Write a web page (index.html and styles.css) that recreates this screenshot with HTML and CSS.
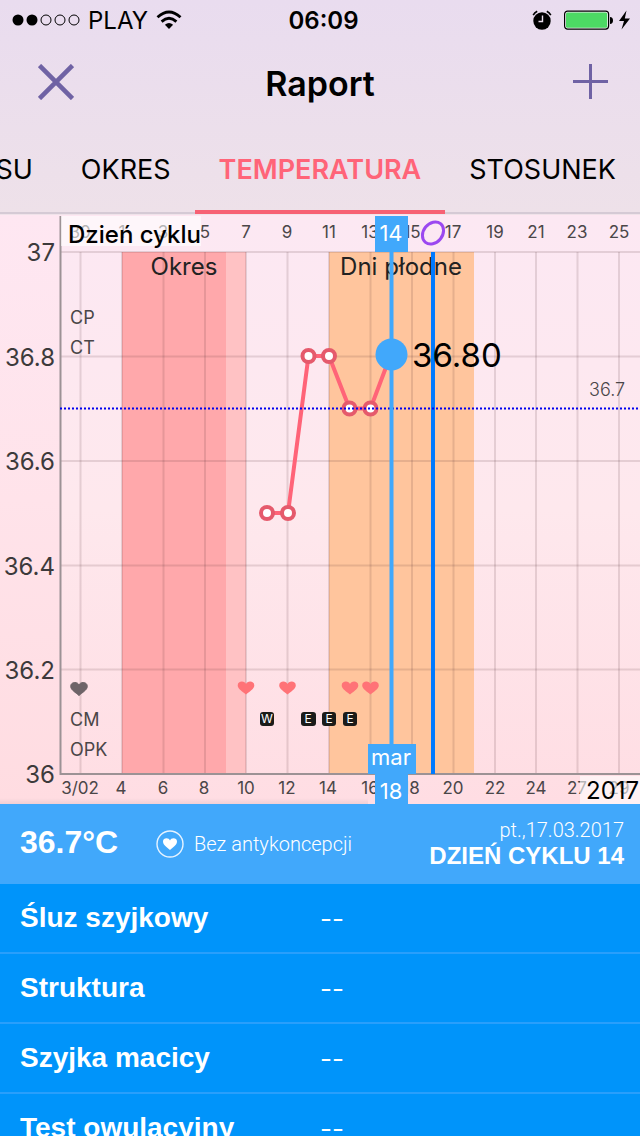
FILE: index.html
```html
<!DOCTYPE html>
<html lang="pl">
<head>
<meta charset="utf-8">
<meta name="viewport" content="width=device-width, initial-scale=1">
<title>Raport</title>
<link rel="stylesheet" href="styles.css">
</head>
<body>
<div class="screen">
  <div class="status">
    <div class="status-side">
      <svg width="68" height="12" viewBox="0 0 68 12" aria-hidden="true">
        <circle cx="6" cy="6" r="5.5"/><circle cx="20" cy="6" r="5.5"/>
        <g fill="none" stroke="#000"><circle cx="34" cy="6" r="5"/><circle cx="48" cy="6" r="5"/><circle cx="62" cy="6" r="5"/></g>
      </svg>
      <span class="carrier">PLAY</span>
      <svg width="26" height="20" viewBox="0 0 26 20" aria-hidden="true">
        <path d="M13 19 L8.9 14.8 Q13 11.2 17.1 14.8Z"/>
        <g fill="none" stroke="#000" stroke-width="2.8"><path d="M5.6 11.6 Q13 5 20.4 11.6"/><path d="M1.5 7.2 Q13 -3.2 24.5 7.2"/></g>
      </svg>
    </div>
    <span class="clock">06:09</span>
    <div class="status-side status-right">
      <svg width="20" height="20" viewBox="0 0 20 20" aria-hidden="true">
        <circle cx="10" cy="11" r="8.7"/><path d="M1.2 5.2A9 9 0 0 1 5.2 1.2M14.8 1.2A9 9 0 0 1 18.8 5.2" fill="none" stroke="#000" stroke-width="1.6"/>
        <path d="M10.5 5.5V11.5H6.5" fill="none" stroke="#ebdeee" stroke-width="1.4"/>
      </svg>
      <svg width="67" height="20" viewBox="0 0 67 20" aria-hidden="true">
        <rect x=".6" y="1.1" width="44" height="18" rx="3" fill="#f4eef5" stroke="#000" stroke-width="1.2"/>
        <rect x="2" y="2.5" width="41.2" height="15.2" rx="1.5" fill="#4cd964"/>
        <path d="M46 7Q49 7.4 49 10.5T46 14Z"/>
        <path d="M62.5 .5L55 11H60L57.5 19.5L66 8.5H60.8Z"/>
      </svg>
    </div>
  </div>

  <header class="bar">
    <button class="icon-button" type="button" aria-label="Zamknij">
      <svg width="36" height="36" viewBox="0 0 36 36"><path d="M1.500 1.500L34.500 34.500M34.500 1.500L1.500 34.500" stroke="#6f62a4" stroke-width="4.6"/></svg>
    </button>
    <h1 class="title">Raport</h1>
    <button class="icon-button icon-button-end" type="button" aria-label="Dodaj">
      <svg width="36" height="36" viewBox="0 0 36 36"><path d="M17.500 0V35M0 17.500H35" stroke="#6f62a4" stroke-width="3"/></svg>
    </button>
  </header>

  <nav class="tabs">
    <a class="tab" href="#su">SU</a>
    <a class="tab" href="#okres">OKRES</a>
    <a class="tab tab-active" href="#temperatura" aria-current="page">TEMPERATURA</a>
    <a class="tab" href="#stosunek">STOSUNEK</a>
  </nav>

  <svg class="chart" viewBox="0 215 640 589" role="img" aria-label="Wykres temperatury">
    <defs>
      <linearGradient id="plot" x1="0" y1="0" x2="0" y2="1"><stop offset="0" stop-color="#fce8f3"/><stop offset=".5" stop-color="#fee8ed"/><stop offset="1" stop-color="#ffdde3"/></linearGradient>
      <linearGradient id="fade" x1="0" y1="0" x2="0" y2="1"><stop offset="0" stop-color="#000" stop-opacity="0"/><stop offset="1" stop-color="#000" stop-opacity=".06"/></linearGradient>
      <path id="heart" d="M0 6.6C-3 3.600 -8.300 1 -8.300 -2.600C-8.300 -5.400 -6.200 -6.500 -4.200 -6.500C-2 -6.500 -.6 -5.500 0 -4C.6 -5.500 2 -6.500 4.200 -6.500C6.200 -6.500 8.300 -5.400 8.300 -2.600C8.300 1 3 3.600 0 6.600Z"/>
    </defs>
    <rect x="60" y="216" width="580" height="588" fill="url(#plot)"/>
    <rect x="122" y="252" width="104" height="522" fill="#ffa8ab"/>
    <rect x="226" y="252" width="20" height="522" fill="#ffc2c4"/>
    <rect x="329" y="252" width="145" height="522" fill="#ffc59d"/>

    <path class="grid" d="M80.500 252V774M122 252V774M163.500 252V774M205 252V774M246 252V774M287.500 252V774M329 252V774M370.500 252V774M412 252V774M453.500 252V774M495 252V774M536 252V774M577.500 252V774M619 252V774"/>
    <path class="grid" d="M60 252H640M60 356.500H640M60 461H640M60 565.500H640M60 669.500H640"/>
    <path class="axis" d="M60.500 216V774H640"/>

    <g class="y-label">
      <text x="55" y="261">37</text><text x="55" y="366">36.8</text><text x="55" y="470">36.6</text>
      <text x="55" y="575">36.4</text><text x="55" y="679">36.2</text><text x="55" y="783">36</text>
    </g>
    <g class="x-label">
      <text x="80" y="238">30</text><text x="122" y="238">1</text><text x="163" y="238">3</text><text x="205" y="238">5</text>
      <text x="246" y="238">7</text><text x="287" y="238">9</text><text x="329" y="238">11</text><text x="370" y="238">13</text>
      <text x="412" y="238">15</text><text x="453" y="238">17</text><text x="495" y="238">19</text><text x="536" y="238">21</text>
      <text x="577" y="238">23</text><text x="619" y="238">25</text>
      <text x="80" y="794">3/02</text><text x="121" y="794">4</text><text x="163" y="794">6</text><text x="204" y="794">8</text>
      <text x="246" y="794">10</text><text x="287" y="794">12</text><text x="328" y="794">14</text><text x="370" y="794">16</text>
      <text x="411" y="794">18</text><text x="453" y="794">20</text><text x="495" y="794">22</text><text x="536" y="794">24</text>
      <text x="577" y="794">27</text><text x="619" y="794">29</text>
    </g>

    <g fill="#fff" fill-opacity=".6"><rect x="61" y="216" width="140" height="30"/><rect x="580" y="776" width="60" height="28"/></g>
    <text class="caption" x="68" y="243">Dzień cyklu</text>
    <text class="year" x="586" y="799">2017</text>
    <g class="phase"><text x="184" y="275">Okres</text><text x="401" y="275">Dni płodne</text></g>
    <g class="marker">
      <text x="70" y="324">CP</text><text x="70" y="354">CT</text><text x="70" y="726">CM</text><text x="70" y="756">OPK</text>
      <text class="average" x="589" y="396">36.7</text>
    </g>

    <use href="#heart" x="79" y="689" fill="#6e6468" stroke="#6e6468"/>
    <g fill="#ff7377"><use href="#heart" x="246" y="688"/><use href="#heart" x="287.500" y="688"/><use href="#heart" x="350" y="688"/><use href="#heart" x="370.500" y="688"/></g>
    <g fill="#1b1b19"><rect x="260" y="712" width="14" height="14" rx="3"/><rect x="301" y="712" width="15" height="14" rx="3"/><rect x="322" y="712" width="14" height="14" rx="3"/><rect x="343" y="712" width="14" height="14" rx="3"/></g>
    <g class="flag"><text x="267" y="723">W</text><text x="308" y="723">E</text><text x="329" y="723">E</text><text x="350" y="723">E</text></g>

    <path d="M433 252V774" stroke="#007aff" stroke-width="4"/>
    <path d="M267 513H288L308.500 356H329L349.500 408.500H370.500L391 354" fill="none" stroke="#ff6478" stroke-width="4"/>
    <g fill="#fff" stroke="#e55a6c" stroke-width="4"><circle cx="267" cy="513" r="6"/><circle cx="288" cy="513" r="6"/><circle cx="308.500" cy="356" r="6"/><circle cx="329" cy="356" r="6"/><circle cx="349.500" cy="408.500" r="6"/><circle cx="370.500" cy="408.500" r="6"/></g>
    <path d="M60 408.500H640" stroke="#0000f0" stroke-width="2" stroke-dasharray="2 2"/>
    <path d="M391.500 250V746" stroke="#41a8fb" stroke-width="4"/>
    <circle cx="391.500" cy="354.500" r="16" fill="#41a8fb"/>
    <g fill="#41a8fb"><rect x="375" y="216" width="33" height="36"/><rect x="368" y="744" width="48" height="30"/><rect x="375" y="774" width="33" height="30"/></g>
    <g class="badge"><text x="391" y="241">14</text><text x="391" y="765">mar</text><text x="391" y="799">18</text></g>
    <ellipse cx="433" cy="233" rx="9.500" ry="12" transform="rotate(39 433 233)" fill="none" stroke="#9b48f0" stroke-width="3"/>
    <text class="reading" x="412" y="367">36.80</text>
    <rect x="0" y="798" width="368" height="6" fill="url(#fade)"/>
  </svg>

  <section class="summary">
    <strong class="temp">36.7°C</strong>
    <div class="method">
      <svg width="28" height="28" viewBox="0 0 28 28" aria-hidden="true"><circle cx="14" cy="14" r="13" fill="none" stroke="#e6f3ff" stroke-width="1.4"/><path d="M14 20C11 17 7 15 7 11.500C7 9.500 8.600 8.300 10.500 8.300C12.200 8.300 13.400 9.200 14 10.500C14.600 9.200 15.800 8.300 17.500 8.300C19.400 8.300 21 9.500 21 11.500C21 15 17 17 14 20Z" fill="#fff"/></svg>
      <span>Bez antykoncepcji</span>
    </div>
    <div class="day"><span class="date">pt.,17.03.2017</span><strong class="cycle-day">DZIEŃ CYKLU 14</strong></div>
  </section>

  <dl class="details">
    <div class="row"><dt>Śluz szyjkowy</dt><dd>--</dd></div>
    <div class="row"><dt>Struktura</dt><dd>--</dd></div>
    <div class="row"><dt>Szyjka macicy</dt><dd>--</dd></div>
    <div class="row"><dt>Test owulacyjny</dt><dd>--</dd></div>
  </dl>
</div>
</body>
</html>
```
FILE: styles.css
```css
* { box-sizing: border-box; }
body { margin: 0; font-family: Inter, "Liberation Sans", sans-serif; color: #000; }
.screen {
  display: flex;
  flex-direction: column;
  height: 100vh;
  overflow: hidden;
  background: linear-gradient(#e9dcef 0, #eee1e9 214px, #fee7f2 215px, #ffe3ea 500px, #ffdce1 804px);
}
.status, .bar, .tabs, .chart, .summary { flex: none; }
.status { display: flex; align-items: center; height: 40px; padding: 0 9px 0 12px; font-size: 24px; }
.status-side { display: flex; flex: 1; align-items: center; gap: 8px; }
.status-right { justify-content: flex-end; gap: 12px; }
.clock { padding-left: 4px; font-weight: 600; }

.bar { display: flex; align-items: center; justify-content: space-between; height: 84px; padding: 0 31px; }
.icon-button { width: 48px; height: 48px; padding: 0 5px 0 7px; border: 0; background: none; }
.icon-button-end { padding: 0 0 0 12px; }
.icon-button svg { display: block; }
.title { margin: 0; padding-top: 2px; font-size: 34px; font-weight: 600; }

.tabs { display: flex; justify-content: flex-end; height: 91px; overflow: hidden; border-bottom: 1px solid #f0e3ea; }
.tab {
  flex: none;
  height: 90px;
  padding: 0 24px;
  border-bottom: 2px solid #d5cad5;
  font-size: 27px;
  line-height: 92px;
  color: #000;
  text-decoration: none;
}
.tab-active { border-bottom: 4px solid #f76174; color: #ff6478; font-weight: 600; }

.chart { display: block; width: 100%; }
.grid { fill: none; stroke: #502832; stroke-opacity: .14; stroke-width: 2; }
.axis { fill: none; stroke: #9c9295; stroke-width: 2; }
.y-label { font-size: 24px; text-anchor: end; fill: #3c3a3b; }
.x-label { font-size: 17px; text-anchor: middle; fill: #4a4648; }
.caption { font-size: 24px; font-weight: 500; }
.year { font-size: 24px; }
.phase { font-size: 24px; text-anchor: middle; fill: #222; }
.marker { font-size: 18px; fill: #4a4648; }
.average { font-weight: 300; }
.flag { font-size: 12px; text-anchor: middle; fill: #fff; }
.badge { font-size: 22px; text-anchor: middle; fill: #fff; }
.reading { font-size: 33px; }

.summary {
  display: flex;
  align-items: center;
  height: 80px;
  padding: 0 16px 0 20px;
  background: #41a8fb;
  color: #fff;
  font-family: "Liberation Sans", sans-serif;
}
.temp { width: 136px; padding-bottom: 4px; font-size: 32px; }
.method { display: flex; align-items: center; gap: 10px; font-family: Roboto, sans-serif; font-size: 20px; font-weight: 300; }
.day { display: flex; flex: 1; flex-direction: column; text-align: right; }
.date { font-family: Roboto, sans-serif; font-size: 20px; font-weight: 300; line-height: 24px; }
.cycle-day { font-size: 24px; line-height: 28px; }

.details {
  flex: 1;
  min-height: 0;
  margin: 0;
  overflow: hidden;
  background: #0094fa;
  color: #fff;
  font-family: "Liberation Sans", sans-serif;
}
.row { display: grid; grid-template-columns: 1fr 1fr; align-items: center; height: 70px; padding: 0 20px; border-bottom: 2px solid #299ffb; }
.row dt { font-size: 28px; font-weight: 700; }
.row dd { margin: 0; font-family: Inter, sans-serif; font-size: 26px; }
```
